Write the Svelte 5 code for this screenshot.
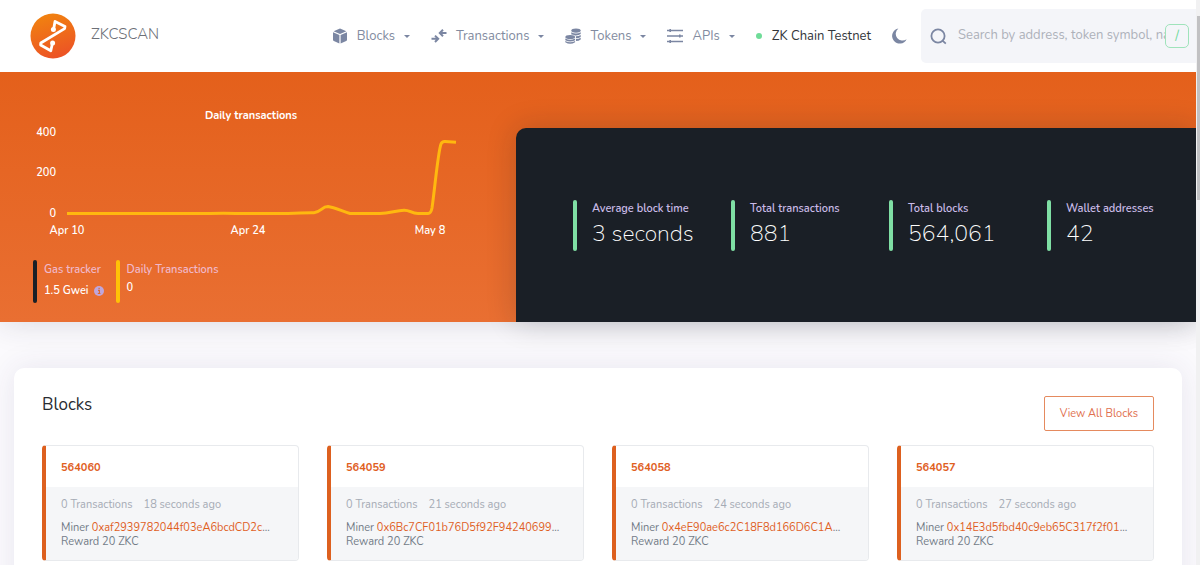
<script>
  const menu = [
    { label: 'Blocks', icon: 'cube' },
    { label: 'Transactions', icon: 'swap' },
    { label: 'Tokens', icon: 'coins' },
    { label: 'APIs', icon: 'api' },
  ];
  const stats = [
    ['Average block time', '3 seconds'],
    ['Total transactions', '881'],
    ['Total blocks', '564,061'],
    ['Wallet addresses', '42'],
  ];
  const blocks = [
    { number: 564060, age: 18, miner: '0xaf2939782044f03eA6bcdCD2c' },
    { number: 564059, age: 21, miner: '0x6Bc7CF01b76D5f92F94240699' },
    { number: 564058, age: 24, miner: '0x4eE90ae6c2C18F8d166D6C1A' },
    { number: 564057, age: 27, miner: '0x14E3d5fbd40c9eb65C317f2f01' },
  ];
</script>

<div class="page">
  <header>
    <a class="brand" href="#home">
      <svg width="46" height="46" viewBox="0 0 46 46" aria-hidden="true">
        <defs>
          <linearGradient id="logo" x1="0.3" y1="0" x2="0.6" y2="1">
            <stop offset="0" stop-color="#f1830f" />
            <stop offset="1" stop-color="#ec5226" />
          </linearGradient>
        </defs>
        <circle cx="23" cy="23" r="22.5" fill="url(#logo)" />
        <g fill="none" stroke="#fff" stroke-width="2.8" stroke-linejoin="round" stroke-linecap="round">
          <path d="M23.6 16.5 L25 8.5 L35 13.6 L34.6 15.6 L10.8 30 L10.6 32 L20.8 37.8 L22.4 30.5" />
        </g>
        <circle cx="23.4" cy="16.6" r="2.5" fill="#fff" />
        <circle cx="22.6" cy="30" r="2.5" fill="#fff" />
      </svg>
      <span>ZKCSCAN</span>
    </a>
    <nav>
      {#each menu as item}
        <button class="item" type="button">
          {#if item.icon === 'cube'}
            <svg width="16" height="16" viewBox="0 0 16 16" fill="currentColor" aria-hidden="true">
              <path d="M8 0.6 L14.4 3.2 L8 6 L1.6 3.2 Z" />
              <path d="M1 4.3 L7.4 7 V15.4 L1.8 13 Q1 12.6 1 11.8 Z" />
              <path d="M15 4.3 L8.6 7 V15.4 L14.2 13 Q15 12.6 15 11.8 Z" />
            </svg>
          {:else if item.icon === 'swap'}
            <svg width="16" height="16" viewBox="0 0 16 16" fill="none" stroke="currentColor" stroke-width="2" aria-hidden="true">
              <path d="M0.5 10.8 H6.5 M4 7.6 L7.2 10.8 L4 14" />
              <path d="M15.5 5 H9.5 M12 1.8 L8.8 5 L12 8.2" />
            </svg>
          {:else if item.icon === 'coins'}
            <svg width="16" height="16" viewBox="0 0 16 16" fill="currentColor" aria-hidden="true">
              <ellipse cx="11" cy="2.6" rx="4.7" ry="2.1" />
              <path d="M6.3 4.3 Q11 6.8 15.7 4.3 V6.1 Q13.4 7.8 10 7.5 Q8.6 6.6 6.3 6.5 Z" />
              <path d="M10.9 8.2 Q13.8 8.2 15.7 6.9 V8.9 Q13.8 10.3 11 10.3 Z" />
              <path d="M11 11 Q13.8 11 15.7 9.7 V11.5 Q13.8 13 11 13.1 Z" />
              <ellipse cx="5.2" cy="9" rx="4.9" ry="2" />
              <path d="M0.3 10.5 Q5.2 13 10.1 10.5 V12.2 Q5.2 14.7 0.3 12.2 Z" />
              <path d="M0.3 12.9 Q5.2 15.4 10.1 12.9 V14.2 Q5.2 17.3 0.3 14.2 Z" />
            </svg>
          {:else}
            <svg width="16" height="16" viewBox="0 0 16 16" fill="none" stroke="currentColor" stroke-width="1.6" aria-hidden="true">
              <path d="M0 2.5 H16 M0 8 H16 M0 13.5 H16" />
              <path d="M3.2 1 V4 M12.8 6.5 V9.5 M3.2 12 V15" />
            </svg>
          {/if}
          <span>{item.label}</span>
          <i class="caret"></i>
        </button>
      {/each}
    </nav>
    <div class="network"><i></i>ZK Chain Testnet</div>
    <button class="theme" type="button" aria-label="Toggle dark mode">
      <svg width="16" height="16" viewBox="0 0 16 16" fill="#7b86a2" aria-hidden="true">
        <path d="M7.4 0.5 A7.6 7.6 0 1 0 15.6 11.2 A6.3 6.3 0 0 1 7.4 0.5 Z" />
      </svg>
    </button>
    <div class="search">
      <svg width="17" height="17" viewBox="0 0 17 17" fill="none" stroke="#7b86a2" stroke-width="1.8" aria-hidden="true">
        <circle cx="8" cy="8" r="6.6" />
        <path d="M12.2 12.4 L15.8 15.6" />
      </svg>
      <input type="text" aria-label="Search" placeholder="Search by address, token symbol, name, transaction hash, or block number" />
      <kbd>/</kbd>
    </div>
  </header>

  <section class="hero">
    <div class="daily">
      <svg class="chart" width="436" height="136" viewBox="0 0 436 136" role="img" aria-label="Daily transactions">
        <text class="title" x="221" y="15" text-anchor="middle">Daily transactions</text>
        <g text-anchor="end">
          <text x="26" y="32">400</text>
          <text x="26" y="72">200</text>
          <text x="26" y="113">0</text>
        </g>
        <g text-anchor="middle">
          <text x="37" y="130">Apr 10</text>
          <text x="218" y="130">Apr 24</text>
          <text x="400" y="130">May 8</text>
        </g>
        <path
          d="M37 109.5 H180 Q194 108.8 206 109.5 H258 Q272 108.6 284 108.7 C291 108 292 102.5 298 102.6 C304 103.5 312 107 320 109.5 H350 C360 109 366 106.6 374 106.2 C380 106 381 109.5 388 109.5 H398 Q401 109.5 402 104 C405 83 408 48 411 40 Q412 37.2 415 37.4 L426 38.3"
          fill="none" stroke="#ffb80f" stroke-width="3" stroke-linejoin="round"
        />
      </svg>
      <div class="trackers">
        <div class="tracker dark">
          <span>Gas tracker</span>
          <b>1.5 Gwei
            <svg width="10" height="10" viewBox="0 0 10 10" aria-hidden="true">
              <circle cx="5" cy="5" r="5" fill="#bfa6dc" />
              <path d="M4 4.4 H5.4 V7.4 M3.8 7.5 H6.4 M4.5 2.4 H5.7" stroke="#e0682c" stroke-width="1.2" fill="none" />
            </svg>
          </b>
        </div>
        <div class="tracker">
          <span>Daily Transactions</span>
          <b>0</b>
        </div>
      </div>
    </div>
    <div class="stats">
      {#each stats as [label, value]}
        <div class="stat">
          <span>{label}</span>
          <strong>{value}</strong>
        </div>
      {/each}
    </div>
  </section>

  <main>
    <div class="heading">
      <h1>Blocks</h1>
      <a href="#blocks">View All Blocks</a>
    </div>
    <div class="cards">
      {#each blocks as block}
        <article>
          <a class="number" href="#block-{block.number}">{block.number}</a>
          <div class="details">
            <p class="meta"><span>0 Transactions</span><span>{block.age} seconds ago</span></p>
            <p>Miner <a href="#miner-{block.miner}">{block.miner}</a>...</p>
            <p>Reward 20 ZKC</p>
          </div>
        </article>
      {/each}
    </div>
  </main>
  <div class="scrollbar"><i></i></div>
</div>

<style>
  :global(body) {
    margin: 0;
    background: #fbfafd;
  }
  .page {
    position: relative;
    box-sizing: border-box;
    height: 100vh;
    overflow: hidden;
    padding-right: 4px;
    font-family: Nunito, Lato, sans-serif;
    font-size: 11px;
    color: #333;
  }
  a {
    text-decoration: none;
    color: #e0601f;
  }
  button {
    font: inherit;
    color: inherit;
    background: none;
    border: 0;
    padding: 0;
    cursor: pointer;
  }
  svg {
    flex: none;
  }
  header {
    display: flex;
    align-items: center;
    height: 72px;
    background: #fff;
    font-size: 13px;
    white-space: nowrap;
  }
  .brand {
    display: flex;
    align-items: center;
    gap: 15px;
    margin: 0 auto 0 30px;
    font-size: 15px;
    line-height: 18px;
    font-weight: 300;
    color: #6d7078;
  }
  .brand span {
    padding-bottom: 4px;
  }
  nav {
    display: flex;
    gap: 21px;
    color: #828ba0;
  }
  .item {
    display: flex;
    align-items: center;
  }
  .item svg {
    color: #7b86a2;
    margin-right: 9px;
  }
  .caret {
    margin-left: 9px;
    border: 3px solid transparent;
    border-top-color: #7b86a2;
    border-bottom: 0;
  }
  .network {
    display: flex;
    align-items: center;
    gap: 10px;
    margin-left: 21px;
    color: #33363b;
  }
  .network i {
    width: 6px;
    height: 6px;
    border-radius: 50%;
    background: #6fdc98;
  }
  .theme {
    display: flex;
    margin: 0 14px 0 20px;
  }
  .search {
    box-sizing: border-box;
    display: flex;
    align-items: center;
    width: 275px;
    height: 54px;
    padding: 0 7px 0 9px;
    border-radius: 5px 0 0 5px;
    background: #f4f5f9;
  }
  .search input {
    flex: 1;
    min-width: 0;
    padding: 0 0 2px;
    margin-left: 11px;
    border: 0;
    outline: 0;
    background: none;
    font: inherit;
    color: #333;
  }
  .search input::placeholder {
    color: #adb1ba;
    opacity: 1;
  }
  kbd {
    box-sizing: border-box;
    width: 24px;
    height: 24px;
    border: 1px solid #9fe3bb;
    border-radius: 5px;
    font: inherit;
    line-height: 22px;
    text-align: center;
    color: #6fd99a;
  }
  .hero {
    position: relative;
    display: grid;
    grid-template-columns: 516px 1fr;
    height: 250px;
    background: linear-gradient(#e4601b, #e96f32);
    box-shadow: 0 0 30px rgba(40, 40, 60, 0.16);
    clip-path: inset(0 0 -60px 0);
  }
  .daily {
    padding: 32px 0 0 30px;
  }
  .chart {
    display: block;
    font-weight: 600;
    fill: #fff;
  }
  .title {
    font-weight: 700;
  }
  .trackers {
    display: flex;
    gap: 12px;
    margin: 20px 0 0 3px;
  }
  .tracker {
    position: relative;
    height: 43px;
    padding-left: 11px;
    font-weight: 600;
    color: #fff;
  }
  .tracker::before,
  .stat::before {
    content: '';
    position: absolute;
    inset: 0 auto 0 0;
    width: 4px;
    border-radius: 2px;
    background: #ffc107;
  }
  .tracker.dark::before {
    background: #1a1f26;
  }
  .tracker span {
    display: block;
    line-height: 20px;
    color: #f0b8cb;
  }
  .tracker b {
    display: flex;
    align-items: center;
    gap: 5px;
    line-height: 16px;
    font-weight: 600;
  }
  .tracker.dark b {
    line-height: 22px;
  }
  .stats {
    display: grid;
    grid-template-columns: repeat(4, 1fr);
    align-content: center;
    gap: 18px;
    margin-top: 56px;
    padding: 0 9px 0 57px;
    border-radius: 10px 0 0 0;
    background: #1a1f26;
    box-shadow: 0 0 30px rgba(20, 25, 30, 0.2);
  }
  .stat {
    position: relative;
    height: 51px;
    padding-left: 19px;
    white-space: nowrap;
    color: #fff;
  }
  .stat::before {
    background: #7fdfa4;
  }
  .stat span {
    display: block;
    line-height: 17px;
    font-weight: 600;
    color: #cbbce8;
  }
  .stat strong {
    display: block;
    font-size: 23px;
    line-height: 34px;
    font-weight: 200;
  }
  main {
    margin: 46px 14px 0;
    padding: 28px 28px 60px;
    border-radius: 10px;
    background: #fff;
    box-shadow: 0 0 30px rgba(60, 50, 110, 0.1);
  }
  .heading {
    display: flex;
    justify-content: space-between;
    height: 49px;
  }
  h1 {
    margin: 0;
    font-size: 17px;
    line-height: 18px;
    font-weight: 400;
    color: #282b30;
  }
  .heading a {
    box-sizing: border-box;
    height: 35px;
    padding: 0 15px;
    border: 1px solid #e58a5e;
    border-radius: 2px;
    line-height: 33px;
    color: #df7150;
  }
  .cards {
    display: grid;
    grid-template-columns: repeat(4, minmax(0, 1fr));
    gap: 28px;
  }
  article {
    box-sizing: border-box;
    height: 116px;
    display: flex;
    flex-direction: column;
    border: 1px solid #e8eaed;
    border-left: 4px solid #dd601f;
    border-radius: 4px;
    overflow: hidden;
  }
  .number {
    padding: 2px 0 0 15px;
    font-weight: 700;
    line-height: 39px;
  }
  .details {
    flex: 1;
    padding: 11px 0 0 15px;
    background: #f5f6f8;
    color: #727b87;
    white-space: nowrap;
  }
  p {
    margin: 0;
    line-height: 14px;
  }
  p.meta {
    display: flex;
    gap: 11px;
    margin-bottom: 9px;
    color: #a5abb5;
  }
  .scrollbar {
    position: absolute;
    inset: 0 0 0 auto;
    width: 4px;
    background: #f1f1f2;
  }
  .scrollbar i {
    display: block;
    width: 3px;
    height: 184px;
    margin: 16px 0 0 1px;
    background: #c1c1c3;
  }
</style>
